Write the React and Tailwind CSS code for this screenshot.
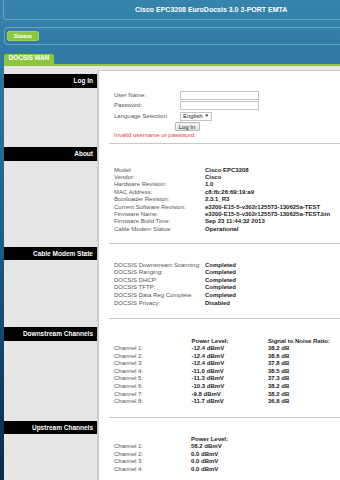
import React from "react";

function Bar({ title, cls }) {
  return (
    <div className={`bg-black text-white font-bold text-[6.5px] flex items-center justify-end pr-[4px] ${cls}`}>
      {title}
    </div>
  );
}

function Section({ title, barCls, padCls, children, top, last }) {
  return (
    <div className="flex">
      <div className="w-[93px] shrink-0">
        <Bar title={title} cls={barCls} />
      </div>
      <div className={`flex-1 bg-white border-l-2 border-[#cdcdcd] pl-[10px] ${top ? "border-t border-t-[#cdcdcd]" : ""}`}>
        <div className={`pl-[5px] ${padCls}`}>{children}</div>
        {!last && <div className="h-px bg-[#c8c8c8]" />}
      </div>
    </div>
  );
}

function KV({ rows, col, lh }) {
  return (
    <div className={`text-[6px] ${lh}`}>
      {rows.map(([k, v]) => (
        <div key={k} className="flex">
          <span className={`${col} shrink-0 text-[#555]`}>{k}</span>
          <span className="font-bold text-[#222] whitespace-nowrap">{v}</span>
        </div>
      ))}
    </div>
  );
}

const about = [
  ["Model:", "Cisco EPC3208"],
  ["Vendor:", "Cisco"],
  ["Hardware Revision:", "1.0"],
  ["MAC Address:", "c8:fb:26:69:19:a9"],
  ["Bootloader Revision:", "2.3.1_R3"],
  ["Current Software Revision:", "e3200-E15-5-v302r125573-130625a-TEST"],
  ["Firmware Name:", "e3200-E15-5-v302r125573-130625a-TEST.bin"],
  ["Firmware Build Time:", "Sep 23 11:44:32 2013"],
  ["Cable Modem Status:", "Operational"],
];

const cms = [
  ["DOCSIS Downstream Scanning:", "Completed"],
  ["DOCSIS Ranging:", "Completed"],
  ["DOCSIS DHCP:", "Completed"],
  ["DOCSIS TFTP:", "Completed"],
  ["DOCSIS Data Reg Complete:", "Completed"],
  ["DOCSIS Privacy:", "Disabled"],
];

const down = [
  ["-12.4 dBmV", "38.2 dB"],
  ["-12.4 dBmV", "38.6 dB"],
  ["-12.4 dBmV", "37.8 dB"],
  ["-11.0 dBmV", "38.5 dB"],
  ["-11.3 dBmV", "37.3 dB"],
  ["-10.3 dBmV", "38.2 dB"],
  ["-9.8 dBmV", "38.2 dB"],
  ["-11.7 dBmV", "36.8 dB"],
];

const up = ["58.2 dBmV", "0.0 dBmV", "0.0 dBmV", "0.0 dBmV"];

export default function App() {
  return (
    <div className="w-[340px] h-[480px] overflow-hidden bg-linear-to-b from-[#3684ac] via-[#1d5c88] to-[#0a2a48] font-['Liberation_Sans',Arial,sans-serif]">
      {/* header */}
      <div className="ml-[3px] h-[20px] border-l border-b border-[#6aa3c4] rounded-bl-[4px] flex items-center pl-[131px]">
        <span className="text-[7px] font-bold text-white leading-none whitespace-nowrap">
          Cisco EPC3208 EuroDocsis 3.0 2-PORT EMTA
        </span>
      </div>

      {/* status bar */}
      <div className="ml-[4px] mt-[6.5px] h-[18px] border border-r-0 border-[#6aa3c4] rounded-l-[4px] flex items-center pl-[2px]">
        <div className="w-[32px] h-[10px] rounded-[2px] bg-[#8cc63f] border border-[#a3d35a] flex items-center justify-center text-[6px] font-bold text-white leading-none">
          Status
        </div>
      </div>

      {/* tab */}
      <div className="ml-[4px] mt-[9px] w-[50px] h-[10px] rounded-t-[2px] bg-[#8cc63f] flex items-center justify-center text-[6.3px] font-bold text-white leading-none whitespace-nowrap">
        DOCSIS WAN
      </div>
      <div className="ml-[4px] h-[2px] bg-[#8cc63f]" />

      {/* main */}
      <div className="ml-[4px] bg-[#e6e6e6] pt-[4.5px] h-full">
        <Section title="Log In" barCls="mt-[4px] h-[14px]" padCls="pt-[19px] pb-[3.5px]" top>
          <div className="w-[146px] text-[6px] text-[#555]">
            <div className="flex items-center h-[10.5px]">
              <span className="w-[66px]">User Name:</span>
              <div className="w-[79px] h-[9px] border border-[#c4c4c4] bg-white" />
            </div>
            <div className="flex items-center h-[10.5px]">
              <span className="w-[66px]">Password:</span>
              <div className="w-[79px] h-[9px] border border-[#c4c4c4] bg-white" />
            </div>
            <div className="flex items-center h-[10.5px]">
              <span className="w-[66px]">Language Selection</span>
              <div className="w-[32px] h-[9px] border border-[#c4c4c4] bg-white flex items-center justify-between px-[2px] text-[#222] leading-none">
                <span>English</span>
                <span className="text-[4.5px]">▼</span>
              </div>
            </div>
            <div className="flex justify-center items-center h-[10.5px]">
              <div className="w-[25px] h-[9px] border border-[#b5b5b5] rounded-[1px] bg-linear-to-b from-[#f6f6f6] to-[#e2e2e2] flex items-center justify-center text-[#222] leading-none">
                Log In
              </div>
            </div>
          </div>
          <div className="text-[6px] leading-[7px] text-[#ee3b3b]">Invalid username or password.</div>
        </Section>

        <Section title="About" barCls="mt-[3px] h-[14px]" padCls="pt-[23px] pb-[9.5px]">
          <KV rows={about} col="w-[91px]" lh="leading-[7.4px]" />
        </Section>

        <Section title="Cable Modem State" barCls="mt-[3px] h-[13.5px]" padCls="pt-[18px] pb-[10.5px]">
          <KV rows={cms} col="w-[91px]" lh="leading-[7.6px]" />
        </Section>

        <Section title="Downstream Channels" barCls="mt-[8px] h-[14px]" padCls="pt-[19px] pb-[11px]">
          <div className="text-[6px] leading-[7.55px]">
            <div className="flex font-bold text-[#222]">
              <span className="w-[77.5px]" />
              <span className="w-[76.5px]">Power Level:</span>
              <span>Signal to Noise Ratio:</span>
            </div>
            {down.map(([p, s], i) => (
              <div key={i} className="flex">
                <span className="w-[77.5px] text-[#555]">Channel {i + 1}:</span>
                <span className="w-[76.5px] font-bold text-[#222]">{p}</span>
                <span className="font-bold text-[#222]">{s}</span>
              </div>
            ))}
          </div>
        </Section>

        <Section title="Upstream Channels" barCls="mt-[3.5px] h-[12.5px]" padCls="pt-[18px] pb-[10px]" last>
          <div className="text-[6px] leading-[7.5px]">
            <div className="flex font-bold text-[#222]">
              <span className="w-[77px]" />
              <span>Power Level:</span>
            </div>
            {up.map((p, i) => (
              <div key={i} className="flex">
                <span className="w-[77px] text-[#555]">Channel {i + 1}:</span>
                <span className="font-bold text-[#222]">{p}</span>
              </div>
            ))}
          </div>
        </Section>
      </div>
    </div>
  );
}
